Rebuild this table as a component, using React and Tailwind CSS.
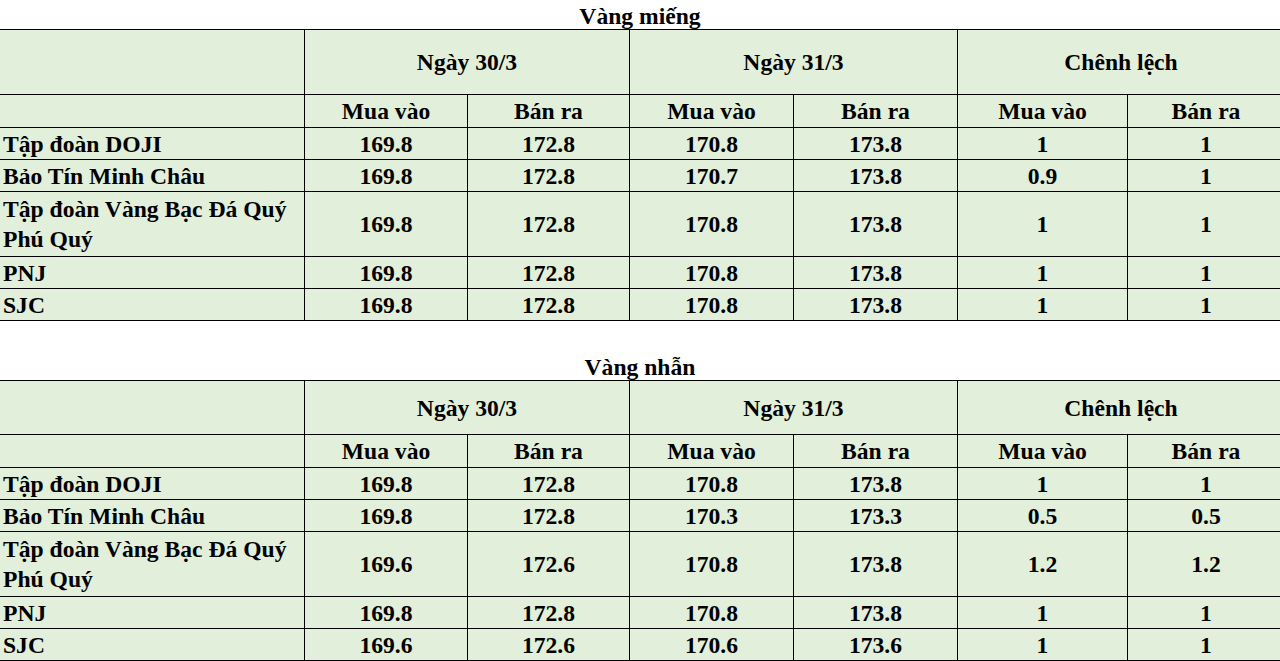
const miengRows = [
  { name: "Tập đoàn DOJI", v: ["169.8", "172.8", "170.8", "173.8", "1", "1"] },
  { name: "Bảo Tín Minh Châu", v: ["169.8", "172.8", "170.7", "173.8", "0.9", "1"] },
  { name: "Tập đoàn Vàng Bạc Đá Quý Phú Quý", v: ["169.8", "172.8", "170.8", "173.8", "1", "1"], tall: true },
  { name: "PNJ", v: ["169.8", "172.8", "170.8", "173.8", "1", "1"] },
  { name: "SJC", v: ["169.8", "172.8", "170.8", "173.8", "1", "1"] },
];

const nhanRows = [
  { name: "Tập đoàn DOJI", v: ["169.8", "172.8", "170.8", "173.8", "1", "1"] },
  { name: "Bảo Tín Minh Châu", v: ["169.8", "172.8", "170.3", "173.3", "0.5", "0.5"] },
  { name: "Tập đoàn Vàng Bạc Đá Quý Phú Quý", v: ["169.6", "172.6", "170.8", "173.8", "1.2", "1.2"], tall: true },
  { name: "PNJ", v: ["169.8", "172.8", "170.8", "173.8", "1", "1"] },
  { name: "SJC", v: ["169.6", "172.6", "170.6", "173.6", "1", "1"] },
];

const cell = "border border-black p-0 align-middle";

const PriceTable = ({ title, rows, headH }) => (
  <div>
    <div className="h-[29px] text-center leading-[32px]">{title}</div>
    <div className="overflow-hidden">
      <table className="-ml-[2px] w-[1286px] table-fixed border-collapse bg-[#e2efda]">
        <colgroup>
          <col className="w-[306px]" />
          <col className="w-[163px]" />
          <col className="w-[162px]" />
          <col className="w-[164px]" />
          <col className="w-[164px]" />
          <col className="w-[170px]" />
          <col className="w-[157px]" />
        </colgroup>
        <tbody>
          <tr>
            <td className={`${cell} ${headH}`}></td>
            <td colSpan={2} className={`${cell} text-center`}>Ngày 30/3</td>
            <td colSpan={2} className={`${cell} text-center`}>Ngày 31/3</td>
            <td colSpan={2} className={`${cell} text-center`}>Chênh lệch</td>
          </tr>
          <tr>
            <td className={`${cell} h-[33px]`}></td>
            <td className={`${cell} text-center`}>Mua vào</td>
            <td className={`${cell} text-center`}>Bán ra</td>
            <td className={`${cell} text-center`}>Mua vào</td>
            <td className={`${cell} text-center`}>Bán ra</td>
            <td className={`${cell} text-center`}>Mua vào</td>
            <td className={`${cell} text-center`}>Bán ra</td>
          </tr>
          {rows.map((r) => (
            <tr key={r.name}>
              <td className={`${cell} pl-[4px] pr-2 ${r.tall ? "h-[65px]" : "h-[32px]"}`}>{r.name}</td>
              {r.v.map((x, i) => (
                <td key={i} className={`${cell} text-center`}>
                  {x}
                </td>
              ))}
            </tr>
          ))}
        </tbody>
      </table>
    </div>
  </div>
);

export default function App() {
  return (
    <div className="h-[661px] overflow-hidden bg-white [font-family:Liberation_Serif,Times_New_Roman,serif] text-[23.6px] font-bold leading-[30px] text-black">
      <PriceTable title="Vàng miếng" rows={miengRows} headH="h-[65px]" />
      <div className="mt-[30px]">
        <PriceTable title="Vàng nhẫn" rows={nhanRows} headH="h-[54px]" />
      </div>
    </div>
  );
}
